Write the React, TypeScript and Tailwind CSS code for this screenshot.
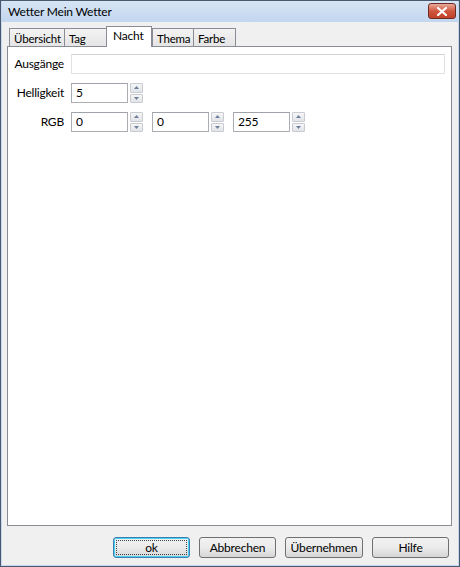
import React from "react";

const font = { fontFamily: 'Lato, "Noto Sans", sans-serif' };

const Spinner: React.FC = () => (
  <div className="flex flex-col gap-[1px] w-[13px] h-[20px] ml-[2px]">
    <div className="flex-1 border border-[#c8cbd2] bg-gradient-to-b from-[#f6f6f6] to-[#e2e4e8] rounded-[1px] flex items-center justify-center">
      <svg width="5" height="3" viewBox="0 0 5 3">
        <path d="M0 3 L2.5 0 L5 3 Z" fill="#6b7e9c" />
      </svg>
    </div>
    <div className="flex-1 border border-[#c8cbd2] bg-gradient-to-b from-[#f6f6f6] to-[#e2e4e8] rounded-[1px] flex items-center justify-center">
      <svg width="5" height="3" viewBox="0 0 5 3">
        <path d="M0 0 L2.5 3 L5 0 Z" fill="#6b7e9c" />
      </svg>
    </div>
  </div>
);

const NumField: React.FC<{ value: string }> = ({ value }) => (
  <div className="flex items-center">
    <div className="w-[57px] h-[20px] border border-[#abadb3] border-t-[#a0a3aa] bg-white pl-[4px] text-[12px] leading-[18px] text-black">
      {value}
    </div>
    <Spinner />
  </div>
);

const Tab: React.FC<{ label: string; width: number; active?: boolean }> = ({ label, width, active }) =>
  active ? (
    <div
      className="h-[21px] -mb-[1px] border border-b-0 border-[#898c95] bg-white text-[12px] leading-[18px] pl-[6px] text-black relative z-10"
      style={{ width }}
    >
      {label}
    </div>
  ) : (
    <div
      className="h-[18px] border border-b-0 border-[#898c95] bg-gradient-to-b from-[#f3f3f3] to-[#e5e5e5] text-[11.5px] leading-[19px] pl-[4px] text-black -mr-[1px] whitespace-nowrap overflow-hidden"
      style={{ width }}
    >
      {label}
    </div>
  );

const Button: React.FC<{ label: string; focused?: boolean; width?: number }> = ({ label, focused, width = 77 }) => (
  <div
    className={
      "h-[21px] rounded-[3px] border flex items-center justify-center text-[12px] text-black bg-gradient-to-b from-[#f2f2f2] via-[#ebebeb] to-[#d6d6d6] " +
      (focused ? "border-[#3c7fb1] shadow-[inset_0_0_0_1px_#48d0f6]" : "border-[#707070]")
    }
    style={{ width }}
  >
    <div
      className={
        "flex items-center justify-center w-full h-full " +
        (focused ? "outline outline-1 outline-dotted outline-[#444] -outline-offset-[3px]" : "")
      }
    >
      {label}
    </div>
  </div>
);

export default function App() {
  return (
    <div style={font} className="w-[460px] h-[567px] border border-[#4a5a6e] bg-[#c4d7ef] flex flex-col p-[1px] pt-0 tracking-[-0.2px]">
      {/* Title bar */}
      <div className="h-[21px] flex items-center justify-between bg-gradient-to-b from-[#d7e5f5] to-[#c2d6ee] pl-[6px] pr-[2px]">
        <span className="text-[12px] text-black">Wetter Mein Wetter</span>
        <div className="w-[28px] h-[16px] mb-[1px] rounded-[3px] border border-[#6d2b23] bg-gradient-to-b from-[#e9a99a] via-[#d0573f] to-[#c1422a] flex items-center justify-center">
          <svg width="10" height="9" viewBox="0 0 10 9">
            <path d="M1 1 L9 8 M9 1 L1 8" stroke="#fff" strokeWidth="2.2" strokeLinecap="square" />
          </svg>
        </div>
      </div>

      {/* Client */}
      <div className="flex-1 bg-[#f0f0f0] flex flex-col pl-[5px] pr-[5px]">
        {/* Tab strip */}
        <div className="flex items-end h-[24px] pl-[2px]">
          <Tab label="Übersicht" width={56} />
          <Tab label="Tag" width={43} />
          <Tab label="Nacht" width={46} active />
          <Tab label="Thema" width={42} />
          <Tab label="Farbe" width={43} />
        </div>

        {/* Panel */}
        <div className="w-[445px] h-[480px] border border-[#898c95] bg-white flex flex-col pt-[7px] gap-[9px]">
          <div className="flex items-center">
            <span className="w-[56px] text-right text-[12px] text-black">Ausgänge</span>
            <div className="ml-[7px] w-[374px] h-[20px] border border-[#dfe1e5] border-t-[#cfd2d7] bg-white" />
          </div>
          <div className="flex items-center">
            <span className="w-[56px] text-right text-[12px] text-black">Helligkeit</span>
            <div className="ml-[7px]">
              <NumField value="5" />
            </div>
          </div>
          <div className="flex items-center">
            <span className="w-[56px] text-right text-[12px] text-black">RGB</span>
            <div className="ml-[7px] flex gap-[9px]">
              <NumField value="0" />
              <NumField value="0" />
              <NumField value="255" />
            </div>
          </div>
        </div>

        {/* Buttons */}
        <div className="flex justify-end gap-[9px] pt-[11px] pr-[4px]">
          <Button label="ok" focused />
          <Button label="Abbrechen" />
          <Button label="Übernehmen" width={78} />
          <Button label="Hilfe" />
        </div>
      </div>
    </div>
  );
}
